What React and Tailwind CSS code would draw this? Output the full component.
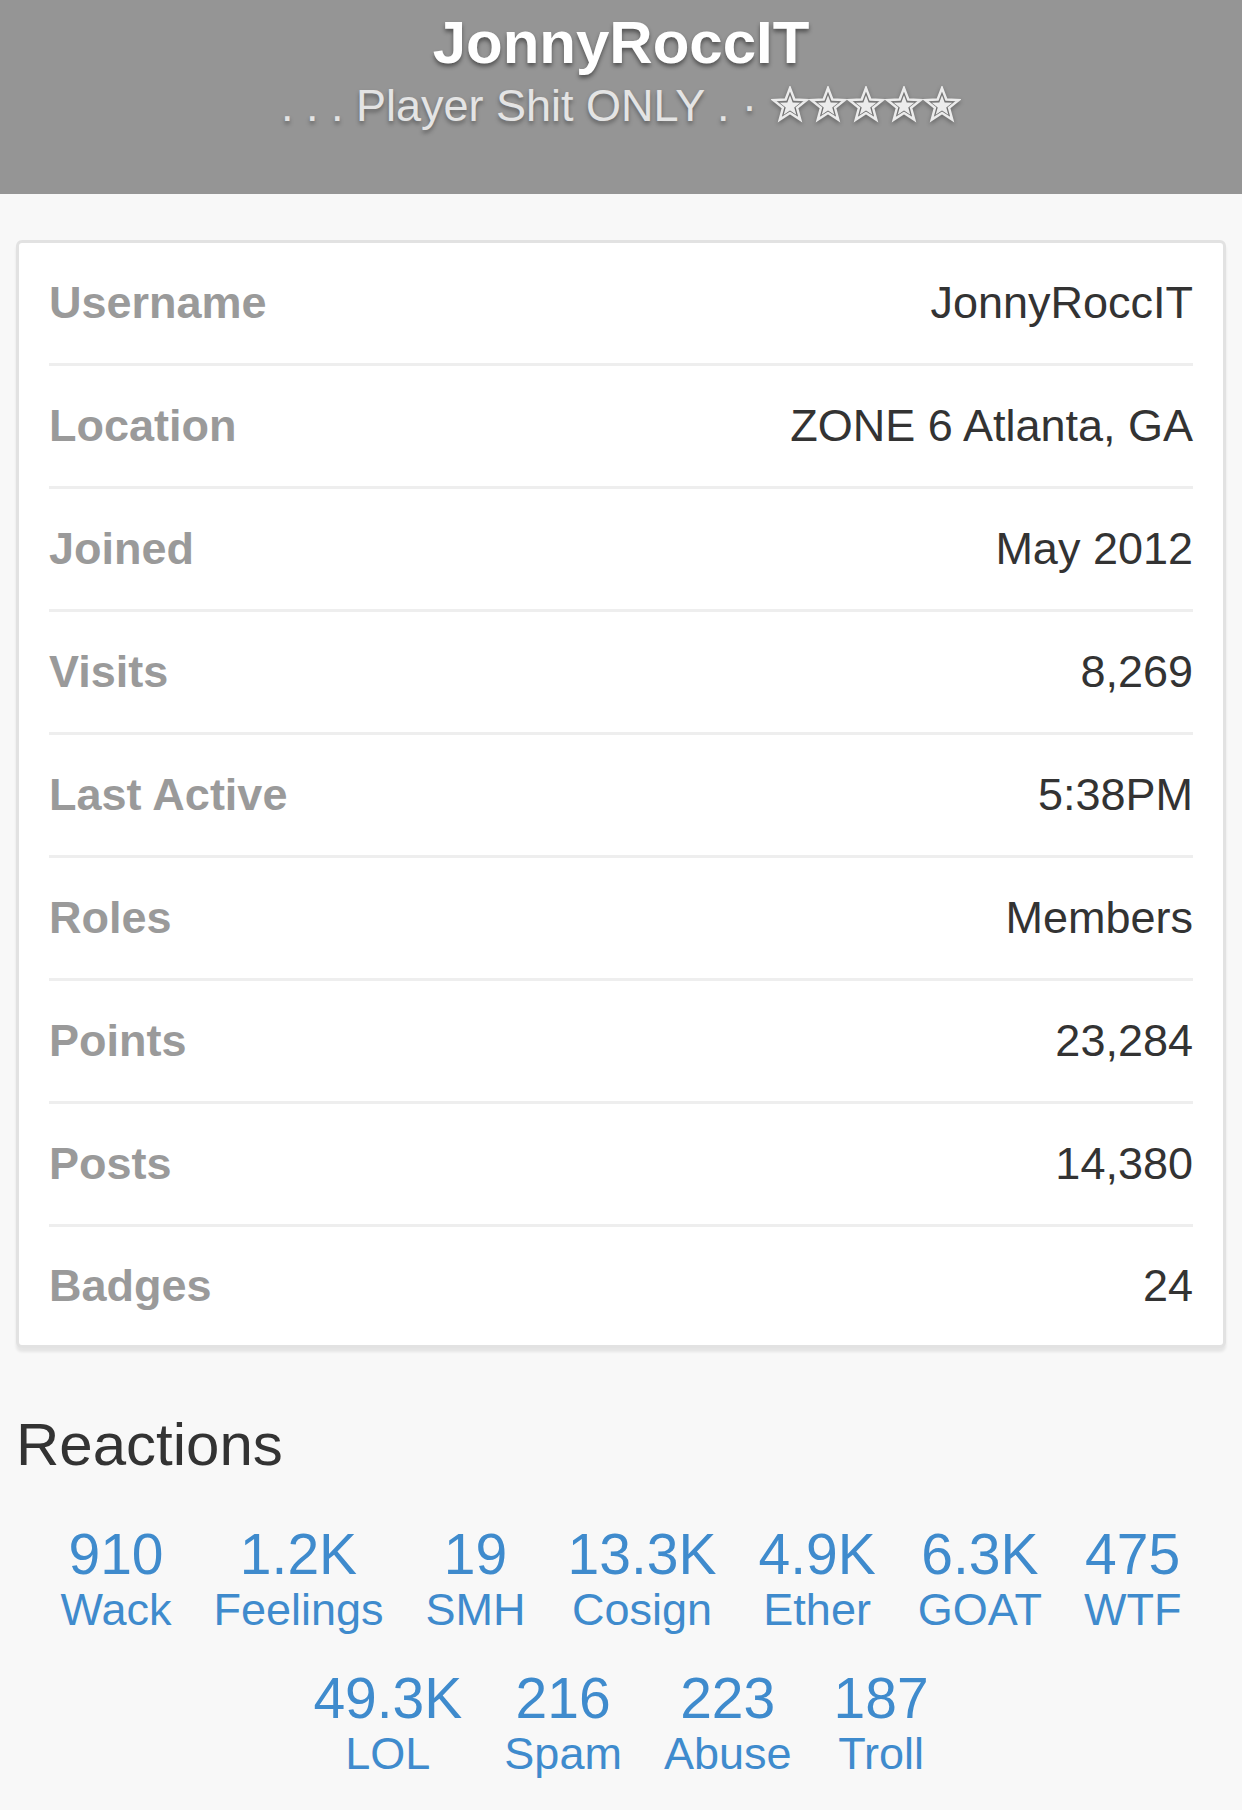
import React from "react";

const rows = [
  ["Username", "JonnyRoccIT"],
  ["Location", "ZONE 6 Atlanta, GA"],
  ["Joined", "May 2012"],
  ["Visits", "8,269"],
  ["Last Active", "5:38PM"],
  ["Roles", "Members"],
  ["Points", "23,284"],
  ["Posts", "14,380"],
  ["Badges", "24"],
];

const reactions = [
  ["910", "Wack"],
  ["1.2K", "Feelings"],
  ["19", "SMH"],
  ["13.3K", "Cosign"],
  ["4.9K", "Ether"],
  ["6.3K", "GOAT"],
  ["475", "WTF"],
  ["49.3K", "LOL"],
  ["216", "Spam"],
  ["223", "Abuse"],
  ["187", "Troll"],
];

function starPoints(cx, cy, R, r) {
  const pts = [];
  for (let i = 0; i < 10; i++) {
    const rad = i % 2 === 0 ? R : r;
    const a = (Math.PI / 5) * i - Math.PI / 2;
    pts.push(`${(cx + rad * Math.cos(a)).toFixed(2)},${(cy + rad * Math.sin(a)).toFixed(2)}`);
  }
  return pts.join(" ");
}

function Star() {
  return (
    <svg width="38" height="37" viewBox="0 0 37 36" className="drop-shadow-[0_2px_2px_rgba(0,0,0,0.35)]">
      <polygon points={starPoints(18.5, 19, 17, 7.2)} fill="none" stroke="#ececec" strokeWidth="2.4" strokeLinejoin="miter" />
      <polygon points={starPoints(18.5, 19.5, 10.5, 4.4)} fill="#ececec" />
    </svg>
  );
}

export default function App() {
  return (
    <div
      className="min-h-[1810px] bg-[#f8f8f8]"
      style={{ fontFamily: '"Liberation Sans", Arial, sans-serif' }}
    >
      <header className="h-[194px] bg-[#959595] flex flex-col items-center pt-[7px]">
        <h1 className="text-[60px] leading-[72px] font-bold text-white [text-shadow:0_3px_4px_rgba(0,0,0,0.45)]">
          JonnyRoccIT
        </h1>
        <div className="flex items-center text-[45px] leading-[54px] text-[#e4e4e4] [text-shadow:0_3px_4px_rgba(0,0,0,0.35)]">
          <span>. . . Player Shit ONLY . · </span>
          <span className="flex items-center ml-[14px] -mt-[4px]">
            <Star />
            <Star />
            <Star />
            <Star />
            <Star />
          </span>
        </div>
      </header>

      <main className="px-[16px] pt-[46px]">
        <div className="bg-white border-[3px] border-[#e2e2e2] rounded-[6px] px-[30px] shadow-[0_4px_3px_rgba(0,0,0,0.08)]">
          {rows.map(([label, value], i) => (
            <div
              key={label}
              className={`flex items-center justify-between ${
                i < rows.length - 1 ? "h-[123px] border-b-[3px] border-[#eeeeee]" : "h-[118px]"
              }`}
            >
              <span className="text-[45px] font-bold text-[#9a9a9a]">{label}</span>
              <span className="text-[45px] text-[#333333]">{value}</span>
            </div>
          ))}
        </div>

        <h2 className="mt-[61px] text-[60px] leading-[72px] text-[#333333]">Reactions</h2>

        <div className="mt-[42px] flex flex-wrap justify-center gap-x-[42px] gap-y-[32px]">
          {reactions.map(([num, label]) => (
            <div key={label} className="flex flex-col items-center text-[#3f8bcd]">
              <span className="text-[57px] leading-[62px]">{num}</span>
              <span className="text-[45px] leading-[50px]">{label}</span>
            </div>
          ))}
        </div>
      </main>
    </div>
  );
}
